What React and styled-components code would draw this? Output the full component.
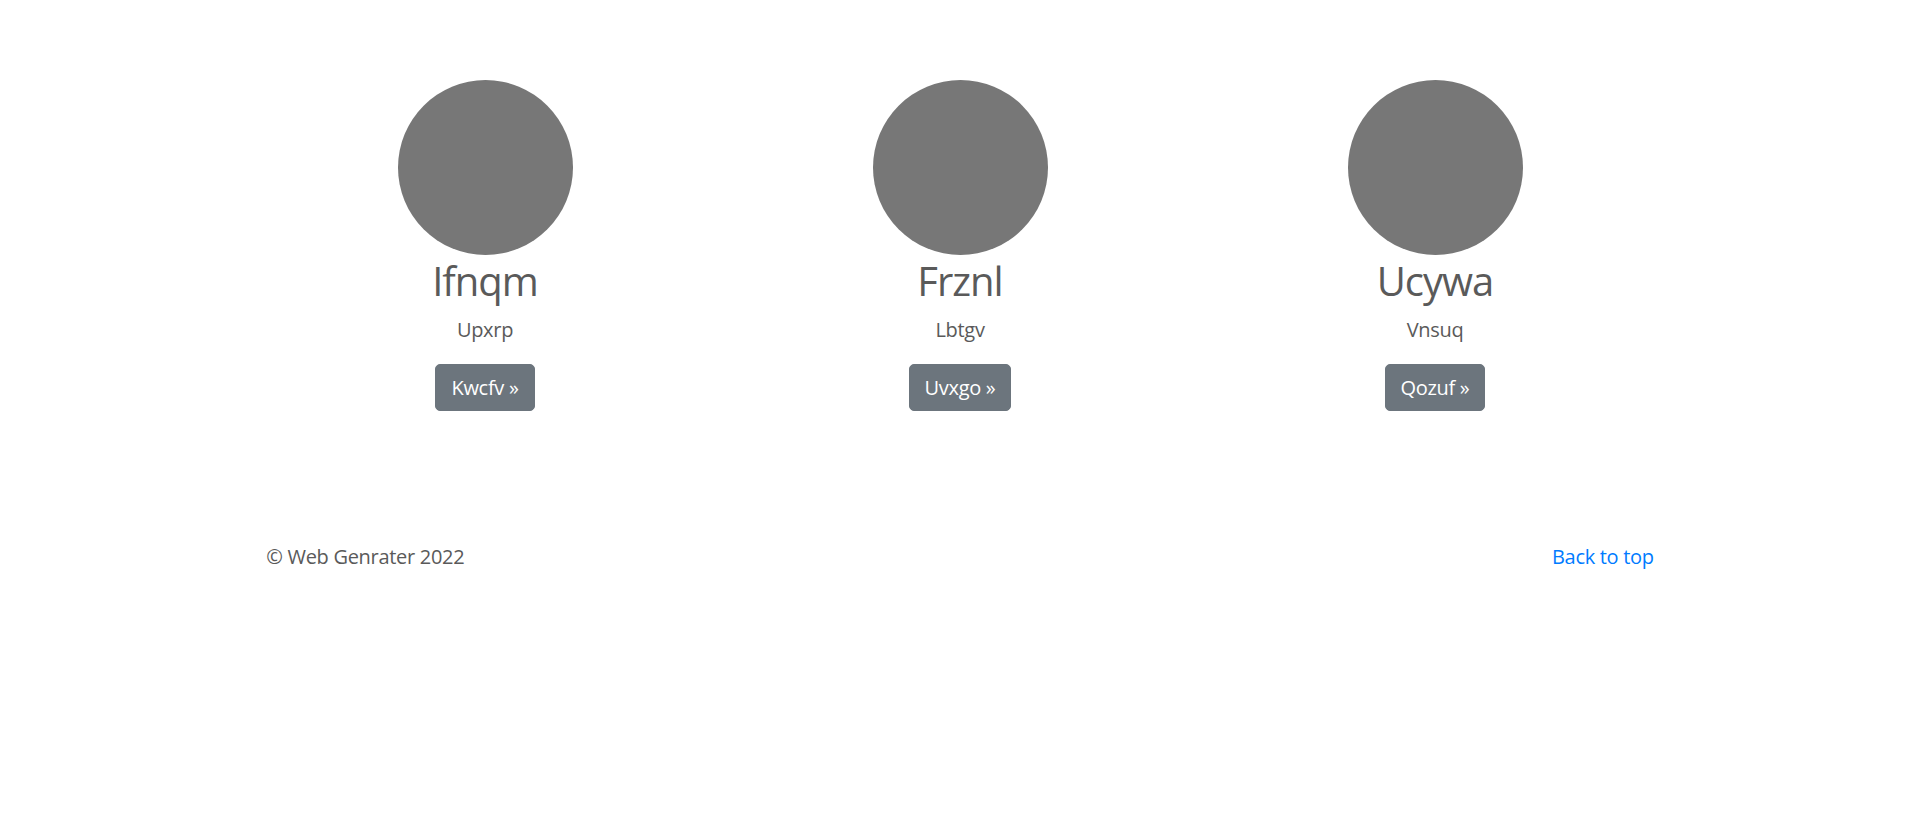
import React from "react";
import styled, { createGlobalStyle } from "styled-components";

const GlobalStyle = createGlobalStyle`
  html, body {
    margin: 0;
    padding: 0;
    background: #fff;
  }
  body {
    font-family: "Open Sans", "Noto Sans", sans-serif;
    font-size: 20px;
    line-height: 1.5;
    color: #5a5a5a;
    letter-spacing: -0.3px;
  }
`;

const people = [
  { name: "Ifnqm", role: "Upxrp", action: "Kwcfv" },
  { name: "Frznl", role: "Lbtgv", action: "Uvxgo" },
  { name: "Ucywa", role: "Vnsuq", action: "Qozuf" },
];

const App = () => {
  return (
    <>
      <GlobalStyle />
      <Marketing>
        <Row>
          {people.map((p) => (
            <Column key={p.name}>
              <Avatar width="175" height="175" viewBox="0 0 175 175">
                <circle cx="87.5" cy="87.5" r="87.5" fill="#777" />
              </Avatar>
              <Name>{p.name}</Name>
              <Role>{p.role}</Role>
              <ButtonLine>
                <Button href="#">{p.action} &raquo;</Button>
              </ButtonLine>
            </Column>
          ))}
        </Row>
      </Marketing>
      <Footer>
        <p>&copy; Web Genrater 2022</p>
        <TopLink href="#">Back to top</TopLink>
      </Footer>
    </>
  );
};

const Container = styled.div`
  max-width: 1425px;
  margin: 0 auto;
  padding: 0 18.75px;
  box-sizing: border-box;
`;

const Marketing = styled(Container)`
  padding-top: 80px;
`;

const Row = styled.div`
  display: grid;
  grid-template-columns: repeat(3, 1fr);
  column-gap: 37.5px;
`;

const Column = styled.div`
  display: flex;
  flex-direction: column;
  align-items: center;
  text-align: center;
  margin-bottom: 30px;
`;

const Avatar = styled.svg`
  display: block;
`;

const Name = styled.h2`
  margin: 2px 0 10px;
  font-size: 40px;
  line-height: 48px;
  font-weight: 400;
  letter-spacing: -1px;
`;

const Role = styled.p`
  margin: 0 15px 20px;
  font-size: 20px;
  line-height: 30px;
`;

const ButtonLine = styled.p`
  margin: -1px 0 20px;
  line-height: 30px;
`;

const Button = styled.a`
  display: inline-block;
  padding: 7.5px 15px;
  font-size: 20px;
  line-height: 30px;
  color: #fff;
  background: #6c757d;
  border: 1.25px solid #6c757d;
  border-radius: 5px;
  text-decoration: none;
`;

const Footer = styled(Container)`
  display: flex;
  justify-content: space-between;
  align-items: flex-start;
  margin-top: 81px;

  p {
    margin: 0 0 20px;
    line-height: 30px;
  }
`;

const TopLink = styled.a`
  color: #007bff;
  text-decoration: none;
  line-height: 30px;
`;

export default App;
